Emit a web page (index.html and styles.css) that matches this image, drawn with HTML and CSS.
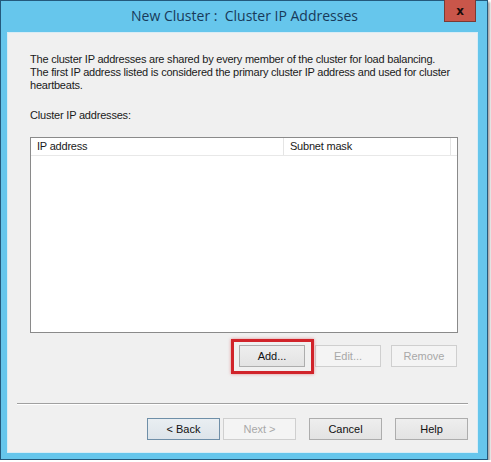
FILE: index.html
```html
<!doctype html>
<html lang="en">
  <head>
    <meta charset="UTF-8" />
    <title>New Cluster : Cluster IP Addresses</title>
    <link rel="stylesheet" href="styles.css">
  </head>
  <body>
    <div class="window">
      <div class="titlebar">
        <span class="title">New Cluster :&nbsp; Cluster IP Addresses</span>
        <button class="close-btn">x</button>
      </div>

      <div class="client">
        <p class="intro">
          The cluster IP addresses are shared by every member of the cluster for load balancing.<br>
          The first IP address listed is considered the primary cluster IP address and used for cluster<br>
          heartbeats.
        </p>

        <p class="label">Cluster IP addresses:</p>

        <div class="listbox">
          <div class="list-header">
            <div class="col col-ip">IP address</div>
            <div class="col col-mask">Subnet mask</div>
            <div class="col col-rest"></div>
          </div>
        </div>

        <div class="list-actions">
          <button class="btn highlighted">Add...</button>
          <button class="btn" disabled>Edit...</button>
          <button class="btn" disabled>Remove</button>
        </div>

        <hr class="separator">

        <div class="wizard-actions">
          <button class="btn btn-default">&lt; Back</button>
          <button class="btn" disabled>Next &gt;</button>
          <button class="btn btn-cancel">Cancel</button>
          <button class="btn btn-help">Help</button>
        </div>
      </div>
    </div>
  </body>
</html>
```

FILE: styles.css
```css
* {
  margin: 0;
  padding: 0;
  box-sizing: border-box;
}

body {
  font-family: 'Liberation Sans', Arial, sans-serif;
  font-size: 11px;
  color: #1a1a1a;
  background: #ffffff;
}

.window {
  width: 488px;
  height: 460px;
  background: #66c6ec;
  border: 1px solid #24597c;
  box-shadow: 2px 2px 2px rgba(0, 0, 0, 0.35);
  padding: 0 9px 6px 6px;
  display: flex;
  flex-direction: column;
}

.titlebar {
  position: relative;
  height: 31px;
  display: flex;
  align-items: center;
  justify-content: center;
  flex-shrink: 0;
}

.title {
  font-family: 'Open Sans', 'Noto Sans', sans-serif;
  font-size: 14px;
  color: #183a5a;
  margin-top: -2px;
  padding-left: 4px;
}

.close-btn {
  position: absolute;
  top: -1px;
  right: 2px;
  width: 32px;
  height: 22px;
  background: #c9564a;
  border: 1px solid #7a3a34;
  border-top: none;
  color: #1a0c0a;
  font-family: 'DejaVu Sans', sans-serif;
  font-weight: bold;
  font-size: 12px;
  line-height: 18px;
}

.client {
  flex: 1;
  min-height: 0;
  background: #f0f0f0;
  border: 1px solid #d9ecf5;
  padding: 20px 19px 0 22px;
  display: flex;
  flex-direction: column;
}

.intro {
  line-height: 13px;
  white-space: nowrap;
  letter-spacing: -0.22px;
}

.label {
  margin-top: 17px;
  line-height: 13px;
  letter-spacing: -0.2px;
}

.listbox {
  margin-top: 15px;
  height: 196px;
  flex-shrink: 0;
  background: #ffffff;
  border: 1px solid #8a8a8a;
}

.list-header {
  display: flex;
  height: 18px;
  border-bottom: 1px solid #e8e8e8;
}

.col {
  line-height: 17px;
  padding-left: 6px;
  letter-spacing: -0.2px;
  border-right: 1px solid #e5e5e5;
}

.col-ip {
  width: 256px;
}

.col-mask {
  width: 169px;
}

.col-rest {
  flex: 1;
  border-right: none;
}

.list-actions {
  display: flex;
  justify-content: flex-end;
  gap: 10px;
  margin-top: 12px;
  padding-right: 1px;
}

.btn {
  width: 66px;
  height: 22px;
  flex-shrink: 0;
  font-family: 'Liberation Sans', Arial, sans-serif;
  font-size: 11px;
  color: #111;
  background: linear-gradient(#eeeeee, #e3e3e3);
  border: 1px solid #adadad;
}

.btn:disabled {
  color: #a8a8a8;
  background: #f4f4f4;
  border-color: #cfcfcf;
}

.highlighted {
  position: relative;
}

.highlighted::after {
  content: '';
  position: absolute;
  top: -7px;
  left: -9px;
  right: -10px;
  bottom: -8px;
  border: 3px solid #d1232a;
  box-shadow: 0 0 3px rgba(209, 35, 42, 0.5);
}

.separator {
  margin: 36px -10px 0 -13px;
  border: none;
  border-top: 1px solid #a0a0a0;
  border-bottom: 1px solid #ffffff;
}

.wizard-actions {
  display: flex;
  justify-content: flex-end;
  margin-top: 13px;
  margin-right: -10px;
}

.wizard-actions .btn {
  width: 73px;
  margin-left: 3px;
}

.btn-default {
  border-color: #6f8fa8;
  background: linear-gradient(#e9eef2, #dde4ea);
}

.wizard-actions .btn-cancel,
.wizard-actions .btn-help {
  margin-left: 13px;
}
```
